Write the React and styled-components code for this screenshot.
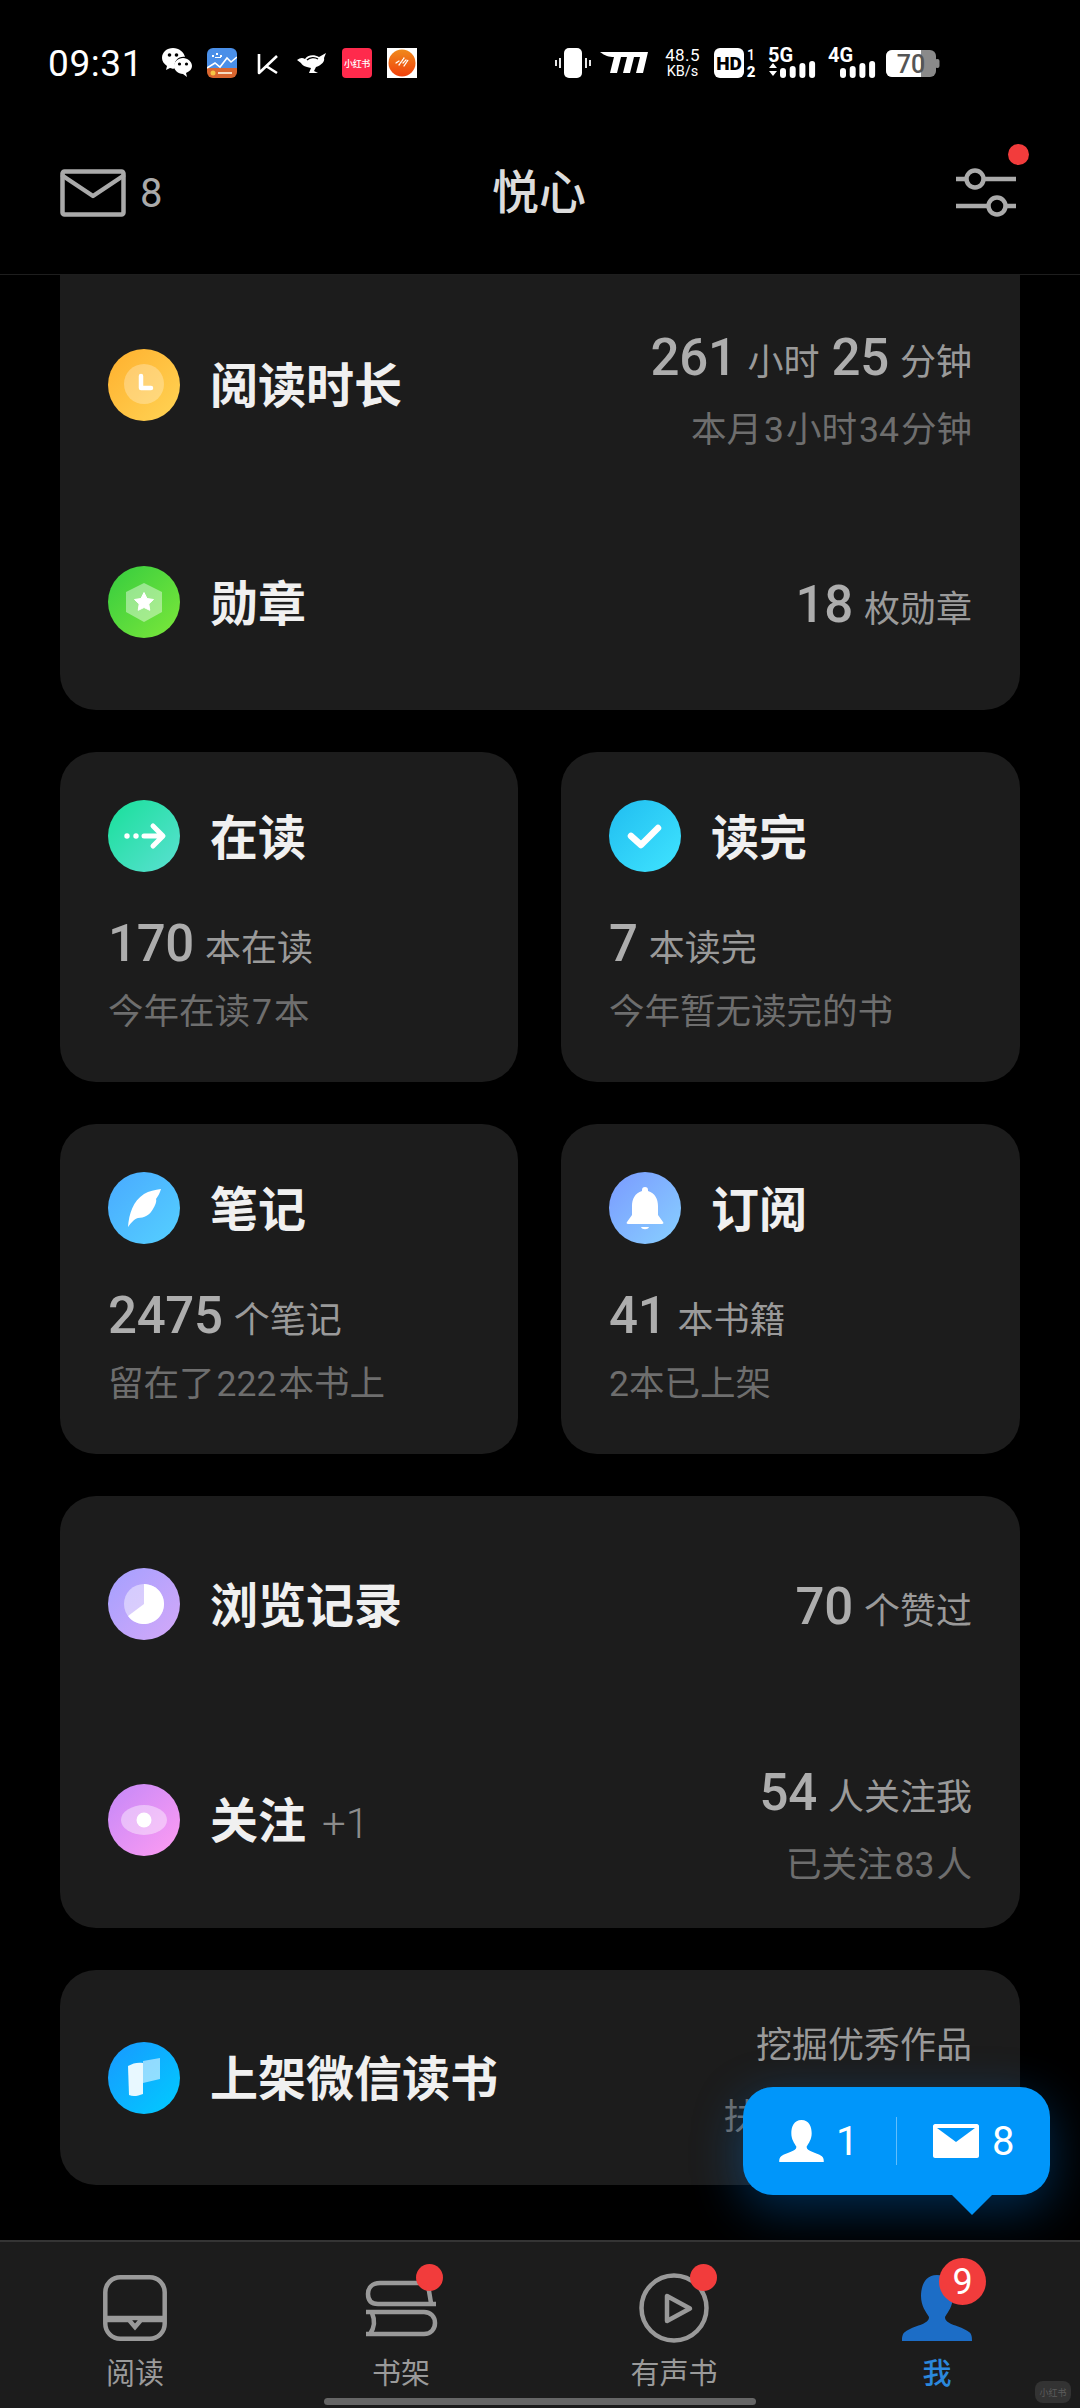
import React from 'react';
import styled, { createGlobalStyle } from 'styled-components';

const Global = createGlobalStyle`
  html, body { margin: 0; padding: 0; background: #000; }
  * { box-sizing: border-box; }
  #root { width: 1080px; height: 2408px; }
`;
const FONT = `Roboto, "Noto Sans CJK SC", sans-serif`;

const Page = styled.div`
  width: 1080px; height: 2408px; background: #000; display: flex; flex-direction: column;
  overflow: hidden; position: relative; font-family: ${FONT};
`;
const Header = styled.header`
  height: 275px; flex: none; display: flex; flex-direction: column; border-bottom: 1px solid #1e1e1e;
`;
const StatusBar = styled.div`
  height: 126px; flex: none; display: flex; align-items: center; padding: 0 140px 0 48px; justify-content: space-between;
`;
const StatusGroup = styled.div`display: flex; align-items: center;`;
const Clock = styled.span`
  color: #fff; font-size: 37px; width: 114px; letter-spacing: .6px; line-height: 1;
`;
const Glyph = styled.svg`
  flex: none; display: block; overflow: visible; margin-left: ${p => p.$ml || 0}px;
`;
const Speed = styled.div`
  margin-left: 15px; width: 39px; color: #fff; display: flex; flex-direction: column; align-items: center; line-height: 1;
`;
const SpeedValue = styled.span`font-size: 17px; letter-spacing: .4px;`;
const SpeedUnit = styled.span`font-size: 14.5px; margin-top: 1px;`;

const Nav = styled.div`
  flex: 1; display: flex; align-items: center; justify-content: space-between; padding: 0 62px 14px 60px; position: relative;
`;
const NavMail = styled.div`display: flex; align-items: center; gap: 14px; color: #aaa; font-size: 40px; width: 170px;`;
const NavTitle = styled.h1`
  margin: 0; font-size: 47px; line-height: 60px; font-weight: 500; color: #dcdcdc; letter-spacing: 0;
`;
const Settings = styled.div`
  width: 170px; display: flex; justify-content: flex-end; position: relative;
`;
const RedDot = styled.span`
  position: absolute; border-radius: 50%; background: #f23c3c;
  width: ${p => p.$size}px; height: ${p => p.$size}px; left: ${p => p.$x}px; top: ${p => p.$y}px;
  color: #fff; display: flex; align-items: center; justify-content: center; font-size: 36px; line-height: 1;
`;

const Scroll = styled.main`
  flex: 1; min-height: 0; padding: 0 60px; display: flex; flex-direction: column; gap: 42px; overflow: hidden;
`;
const Card = styled.section`
  background: #1c1c1c; flex: none; border-radius: ${p => p.$flatTop ? '0 0 36px 36px' : '36px'};
  ${p => p.$half ? 'padding: 48px 48px 0; height: 330px;' : 'padding: 0 48px;'}
`;
const Row = styled.div`
  height: ${p => p.$h || 216}px; display: flex; align-items: center; justify-content: space-between;
`;
const TitleGroup = styled.div`display: flex; align-items: center; gap: 30px;`;
const IconCircle = styled.div`
  width: 72px; height: 72px; border-radius: 50%; flex: none; display: flex; align-items: center; justify-content: center;
  background: linear-gradient(135deg, ${p => p.$from}, ${p => p.$to});
`;
const Title = styled.h2`
  margin: 0; padding-top: 5px; font-size: 48px; line-height: 60px; font-weight: 600; color: #f0f0f0; white-space: nowrap;
`;
const Extra = styled.span`
  font-weight: 300; font-size: 42px; color: #8c8c8c; margin-left: 16px;
`;
const Side = styled.div`
  display: flex; flex-direction: column; align-items: flex-end; padding-top: ${p => p.$pt ?? 14}px;
`;
const StatLine = styled.div`
  display: flex; align-items: baseline; height: 58px; white-space: nowrap;
  margin-top: ${p => p.$mt || 0}px;
`;
const Num = styled.span`
  font-size: 51px; line-height: 58px; font-weight: 500; color: #adadad; letter-spacing: -0.3px;
  margin-left: ${p => p.$ml || 0}px;
`;
const Unit = styled.span`
  font-size: 36px; line-height: 58px; color: #9a9a9a; margin-left: 11px;
`;
const Sub = styled.div`
  font-size: 35.5px; line-height: 50px; color: #6e6e6e; white-space: nowrap; margin-top: ${p => p.$mt || 0}px;
`;
const SubNum = styled.span`margin: 0 2px;`;
const Plain = styled.div`
  font-size: 36px; line-height: 50px; color: #9a9a9a; white-space: nowrap;
`;
const HalfGrid = styled.div`
  display: grid; grid-template-columns: 458px 459px; column-gap: 43px; flex: none;
`;

const Bubble = styled.div`
  position: absolute; left: 743px; top: 2087px; width: 307px; height: 108px; border-radius: 30px; background: #0096fa;
  box-shadow: 0 14px 50px rgba(0,130,240,.34); display: flex; align-items: center; color: #fff; font-size: 40px;
  &::after {
    content: ''; position: absolute; left: 209px; top: 108px; width: 0; height: 0;
    border-left: 20px solid transparent; border-right: 20px solid transparent; border-top: 20px solid #0096fa;
  }
`;
const BubbleItem = styled.div`
  display: flex; align-items: center; gap: ${p => p.$gap}px; padding-left: ${p => p.$pl}px; width: ${p => p.$w}px;
`;
const BubbleDivider = styled.span`width: 1px; height: 48px; background: rgba(255,255,255,.38); flex: none;`;

const TabBar = styled.nav`
  height: 168px; flex: none; background: #1c1c1c; border-top: 2px solid #343434; padding: 30px 0 0 85px;
  display: grid; grid-template-columns: 266px 273px 263px 100px; position: relative;
`;
const Tab = styled.div`
  width: 100px; display: flex; flex-direction: column; align-items: center; position: relative;
`;
const TabIcon = styled.div`
  height: 72px; display: flex; align-items: center; justify-content: center;
`;
const TabLabel = styled.span`
  margin-top: 10px; font-size: 29px; line-height: 40px; white-space: nowrap; color: ${p => p.$active ? '#2b88dc' : '#9a9a9a'};
  font-weight: ${p => p.$active ? 500 : 400};
`;
const HomeBar = styled.span`
  position: absolute; left: 324px; top: 156px; width: 432px; height: 7px; border-radius: 4px; background: #666;
`;
const Watermark = styled.span`
  position: absolute; left: 1035px; top: 139px; width: 36px; height: 22px; border-radius: 8px; background: #333;
  color: #5c5c5c; font-size: 9px; display: flex; align-items: center; justify-content: center; white-space: nowrap;
`;
const RedBook = styled.span`
  margin-left: 15px; width: 30px; height: 30px; border-radius: 4px; background: #ff2a4c; color: #fff; font-size: 9px;
  display: flex; align-items: center; justify-content: center; white-space: nowrap; letter-spacing: -.3px; font-weight: 500;
`;

const W = { stroke: '#fff', fill: 'none', strokeLinecap: 'round', strokeLinejoin: 'round' };

const icons = {
  clock: <svg width="72" height="72" viewBox="0 0 72 72"><circle cx="36" cy="35" r="20" fill="#fff" opacity=".28" /><path d="M33 27V39H43" {...W} strokeWidth="4.5" /></svg>,
  medal: <svg width="72" height="72" viewBox="0 0 72 72"><path d="M36 17 54 26V46L36 56 18 46V26Z" fill="#fff" opacity=".42" /><path d="M36 26.5l3 6 6.5 1-4.7 4.5 1 6.3-5.8-2.8-5.8 2.8 1-6.3-4.7-4.5 6.5-1z" fill="#fff" stroke="#fff" strokeLinejoin="round" /></svg>,
  arrow: <svg width="72" height="72" viewBox="0 0 72 72"><circle cx="19" cy="36" r="2.7" fill="#fff" /><circle cx="28" cy="36" r="2.7" fill="#fff" /><path d="M36 36H54M45 26 55 36 45 46" {...W} strokeWidth="5" /></svg>,
  check: <svg width="72" height="72" viewBox="0 0 72 72"><path d="M22 36 32 45 49 28" {...W} strokeWidth="6.5" /></svg>,
  feather: <svg width="72" height="72" viewBox="0 0 72 72"><path d="M20 55C21 42 25 29 36 22 41 19 47 18 53 17 52 21 50 24 48 27 49 29 47 34 45 37 42 43 36 46 30 46 26 47 23 51 20 55Z" fill="#fff" /></svg>,
  bell: <svg width="72" height="72" viewBox="0 0 72 72"><path d="M36 15c2 0 3 1 3 3v1c7 2 10 8 10 15v9l5 7c1 1 0 2-1 2H19c-1 0-2-1-1-2l5-7v-9c0-7 3-13 10-15v-1c0-2 1-3 3-3Z" fill="#fff" /><path d="M32 55H40C39 58 33 58 32 55Z" fill="#fff" /></svg>,
  pie: <svg width="72" height="72" viewBox="0 0 72 72"><circle cx="36" cy="36" r="20" fill="#fff" opacity=".45" /><path d="M36 36V16A20 20 0 1 1 20 48Z" fill="#fff" /></svg>,
  eye: <svg width="72" height="72" viewBox="0 0 72 72"><ellipse cx="36" cy="36" rx="23" ry="15" fill="#fff" opacity=".42" /><circle cx="36" cy="36" r="7.5" fill="#fff" /></svg>,
  store: <svg width="72" height="72" viewBox="0 0 72 72"><path d="M35 19 52 16V37L35 41Z" fill="#fff" opacity=".55" /><path d="M20 24C25 21 30 20 35 21V52C30 54 25 55 21 53Z" fill="#e8f8ff" /></svg>,
};

const MailOutline = () => (
  <svg width="66" height="48" viewBox="0 0 66 48" fill="none" stroke="#aaa" strokeWidth="4.5" strokeLinejoin="round">
    <rect x="2.5" y="2.5" width="61" height="43" rx="2" /><path d="M3 7 33 27 63 7" strokeLinecap="round" />
  </svg>
);
const Sliders = () => (
  <svg width="62" height="50" viewBox="0 0 62 50" fill="none" stroke="#aaa" strokeWidth="4.5">
    <path d="M0 11H10M28 11H60M0 38H32M50 38H60" />
    <circle cx="19" cy="11" r="8.5" /><circle cx="41" cy="38" r="8.5" />
  </svg>
);
const person = "M35 0C23 0 19 11 19 21 19 31 24 37 27 42 27 50 12 50 3 57 0 59 0 63 0 66H70C70 63 70 59 67 57 58 50 43 50 43 42 46 37 51 31 51 21 51 11 47 0 35 0Z";

const Signal = ({ label, arrows, ml }) => (
  <Glyph $ml={ml} width="48" height="30" viewBox="0 0 48 30">
    <text x={0} y={14} fontSize="20" fontWeight="700" fill="#fff" fontFamily="Roboto, sans-serif">{label}</text>
    {arrows && <path d="M5 15 9 20H1ZM1 23H9L5 28Z" fill="#fff" />}
    {[0, 1, 2, 3].map(i => {
      const h = [10, 12, 15, 17][i];
      return <rect key={i} x={12 + i * 9.7} y={30 - h} width="6" height={h} rx="3" fill="#fff" />;
    })}
  </Glyph>
);

const StatusLeft = () => (
  <StatusGroup>
    <Clock>09:31</Clock>
    <Glyph width="30" height="30" viewBox="0 0 30 30">
      <path d="M11 0C5 0 0 4 0 10c0 3 2 6 5 8l-1 4 4-2c3 1 4 1 5 0C11 13 17 8 23 9 22 4 17 0 11 0Z" fill="#fff" />
      <path d="M21 10c-5 0-9 4-9 8s4 8 9 8l4 3-1-4c4-2 6-4 6-7 0-4-4-8-9-8Z" fill="#fff" />
      <circle cx="7.5" cy="7" r="1.8" /><circle cx="14.5" cy="7" r="1.8" /><circle cx="17.5" cy="16" r="1.6" /><circle cx="24.5" cy="16" r="1.6" />
    </Glyph>
    <Glyph $ml={15} width="30" height="30" viewBox="0 0 30 30">
      <defs><clipPath id="app"><rect width="30" height="30" rx="6" /></clipPath></defs>
      <g clipPath="url(#app)">
        <rect width="30" height="21" fill="#4a8fe8" /><rect y="20" width="30" height="10" fill="#d9662f" />
        <path d="M0 20 8 15 13 19 20 10 24 14 30 9" fill="none" stroke="#fff" strokeWidth="1.6" />
        <path d="M5 7h2v2H5zM9 5h2v2H9zM13 7h2v2h-2zM8 9h6v1H8z" fill="#fff" />
        <circle cx="6" cy="25" r="2.5" fill="#f6c544" /><rect x="11" y="24" width="14" height="2" fill="#f8dcc0" />
      </g>
    </Glyph>
    <Glyph $ml={15} width="30" height="30" viewBox="0 0 30 30">
      <path d="M7 6V25L25 8M14 18 25 25" fill="none" stroke="#fff" strokeWidth="2.6" strokeLinejoin="round" />
    </Glyph>
    <Glyph $ml={15} width="30" height="30" viewBox="0 0 30 30">
      <path d="M0 12C3 10 5 9 8 11 10 7 17 6 22 9L29 5 27 10C28 13 25 17 19 19L17 23 21 25H12L14 20C8 19 5 17 4 15Z" fill="#fff" />
      <path d="M10 12C13 9 18 9 21 11" fill="none" stroke="#000" strokeWidth="1.4" />
    </Glyph>
    <RedBook>小红书</RedBook>
    <Glyph $ml={15} width="30" height="30" viewBox="0 0 30 30">
      <rect width="30" height="30" fill="#fff" />
      <defs><linearGradient id="orange" x1="0" y1="0" x2="0" y2="1"><stop offset="0" stopColor="#f08a1c" /><stop offset="1" stopColor="#f0400c" /></linearGradient></defs>
      <circle cx="15" cy="15" r="13.5" fill="url(#orange)" />
      <path d="M9 15l3-2M12 17l5-7M16 15l3-3M17 18l4-6" stroke="#fff" strokeWidth="1.3" strokeLinecap="round" strokeDasharray="1.6 1" />
    </Glyph>
  </StatusGroup>
);

const StatusRight = () => (
  <StatusGroup>
    <Glyph width="36" height="30" viewBox="0 0 36 30">
      <rect x="9" y="0" width="18" height="30" rx="5" fill="#fff" />
      <path d="M5 10V20M1 12V18M31 10V20M35 12V18" stroke="#fff" strokeWidth="1.8" />
    </Glyph>
    <Glyph $ml={9} width="48" height="24" viewBox="0 0 48 24">
      <path d="M0 1H48L43 22H36L40 6 34 6 30 22H23L27 6H21L17 22H10L14 6C9 6 5 5 0 1Z" fill="#fff" />
    </Glyph>
    <Speed><SpeedValue>48.5</SpeedValue><SpeedUnit>KB/s</SpeedUnit></Speed>
    <Glyph $ml={12} width="43" height="30" viewBox="0 0 43 30">
      <rect width="30" height="30" rx="6" fill="#fff" />
      <text x="15" y="22" textAnchor="middle" fontSize="19" fontWeight="900" fill="#000" fontFamily="Roboto, sans-serif">HD</text>
      <text x="37" y="12" textAnchor="middle" fontSize="14" fontWeight="500" fill="#fff" fontFamily="Roboto, sans-serif">1</text>
      <text x="37" y="29" textAnchor="middle" fontSize="15" fontWeight="900" fill="#fff" fontFamily="Roboto, sans-serif">2</text>
    </Glyph>
    <Signal label="5G" arrows ml={11} />
    <Signal label="4G" ml={12} />
    <Glyph $ml={10} width="54" height="27" viewBox="0 0 54 27">
      <defs><clipPath id="bat"><rect width="50" height="27" rx="6" /></clipPath></defs>
      <g clipPath="url(#bat)"><rect width="50" height="27" fill="#8a8a8a" /><rect width="35" height="27" fill="#fff" /></g>
      <rect x="49" y="9" width="4.5" height="9" rx="2" fill="#8a8a8a" />
      <text x="25" y="23" textAnchor="middle" fontSize="25" fontWeight="500" fill="#555" fontFamily="Roboto, sans-serif">70</text>
    </Glyph>
  </StatusGroup>
);

const HalfCard = ({ icon, from, to, title, num, unit, sub }) => (
  <Card $half>
    <TitleGroup><IconCircle $from={from} $to={to}>{icons[icon]}</IconCircle><Title>{title}</Title></TitleGroup>
    <StatLine $mt={43}><Num>{num}</Num><Unit>{unit}</Unit></StatLine>
    <Sub $mt={14}>{sub}</Sub>
  </Card>
);
const TitleIcon = ({ icon, from, to, children }) => (
  <TitleGroup><IconCircle $from={from} $to={to}>{icons[icon]}</IconCircle><Title>{children}</Title></TitleGroup>
);

export default function App() {
  return (
    <Page>
      <Global />
      <Header>
        <StatusBar><StatusLeft /><StatusRight /></StatusBar>
        <Nav>
          <NavMail><MailOutline /><span>8</span></NavMail>
          <NavTitle>悦心</NavTitle>
          <Settings><Sliders /><RedDot $size={21} $x={160} $y={-24} /></Settings>
        </Nav>
      </Header>

      <Scroll>
        <Card $flatTop>
          <Row $h={219}>
            <TitleIcon icon="clock" from="#ffb02e" to="#ffd455">阅读时长</TitleIcon>
            <Side>
              <StatLine><Num>261</Num><Unit>小时</Unit><Num $ml={12}>25</Num><Unit>分钟</Unit></StatLine>
              <Sub $mt={18}>本月<SubNum>3</SubNum>小时<SubNum>34</SubNum>分钟</Sub>
            </Side>
          </Row>
          <Row>
            <TitleIcon icon="medal" from="#35cc3f" to="#7de83a">勋章</TitleIcon>
            <Side $pt={6}><StatLine><Num>18</Num><Unit>枚勋章</Unit></StatLine></Side>
          </Row>
        </Card>

        <HalfGrid>
          <HalfCard icon="arrow" from="#18e09a" to="#5be0d2" title="在读" num="170" unit="本在读" sub={<>今年在读<SubNum>7</SubNum>本</>} />
          <HalfCard icon="check" from="#20bdf0" to="#40e4ff" title="读完" num="7" unit="本读完" sub="今年暂无读完的书" />
        </HalfGrid>
        <HalfGrid>
          <HalfCard icon="feather" from="#49aaff" to="#55d0ff" title="笔记" num="2475" unit="个笔记" sub={<>留在了<SubNum>222</SubNum>本书上</>} />
          <HalfCard icon="bell" from="#7a9aff" to="#88d0ff" title="订阅" num="41" unit="本书籍" sub="2本已上架" />
        </HalfGrid>

        <Card>
          <Row>
            <TitleIcon icon="pie" from="#a4a0ff" to="#d4a8f8">浏览记录</TitleIcon>
            <Side $pt={6}><StatLine><Num>70</Num><Unit>个赞过</Unit></StatLine></Side>
          </Row>
          <Row>
            <TitleIcon icon="eye" from="#c488f8" to="#ff9cf2">关注<Extra>+1</Extra></TitleIcon>
            <Side>
              <StatLine><Num>54</Num><Unit>人关注我</Unit></StatLine>
              <Sub $mt={18}>已关注<SubNum>83</SubNum>人</Sub>
            </Side>
          </Row>
        </Card>

        <Card>
          <Row $h={215}>
            <TitleIcon icon="store" from="#1898ff" to="#00ccff">上架微信读书</TitleIcon>
            <Side $pt={8}>
              <Plain>挖掘优秀作品</Plain>
              <Sub $mt={21}>扶持新锐创作者</Sub>
            </Side>
          </Row>
        </Card>
      </Scroll>

      <Bubble>
        <BubbleItem $pl={36} $gap={12} $w={153}>
          <svg width="45" height="42" viewBox="0 0 70 66"><path d={person} fill="#fff" /></svg>
          <span>1</span>
        </BubbleItem>
        <BubbleDivider />
        <BubbleItem $pl={36} $gap={13} $w={150}>
          <svg width="46" height="34" viewBox="0 0 46 34">
            <path d="M2 0H44C45 0 46 1 46 2V32C46 33 45 34 44 34H2C1 34 0 33 0 32V2C0 1 1 0 2 0Z" fill="#fff" />
            <path d="M4 4H42L23 18Z" fill="#0096fa" />
          </svg>
          <span>8</span>
        </BubbleItem>
      </Bubble>

      <TabBar>
        <Tab>
          <TabIcon>
            <svg width="64" height="66" viewBox="0 0 64 66" fill="none" stroke="#999" strokeWidth="4.5">
              <rect x="2.3" y="2.3" width="59.4" height="61.4" rx="15" />
              <path d="M3 43H61M3 45H26L32 52 38 45H61" />
            </svg>
          </TabIcon>
          <TabLabel>阅读</TabLabel>
        </Tab>
        <Tab>
          <TabIcon>
            <svg width="74" height="58" viewBox="0 0 74 58" fill="none" stroke="#999" strokeWidth="4.5">
              <path d="M60 4H16C8 4 4 9 4 15S7 25 14 25H72M64 6 67 24" />
              <path d="M2 55H60C67 55 71 50 71 44S67 33 60 33H2M8 34C11 41 11 48 6 55" />
            </svg>
          </TabIcon>
          <RedDot $size={27} $x={65} $y={-8} />
          <TabLabel>书架</TabLabel>
        </Tab>
        <Tab>
          <TabIcon>
            <svg width="70" height="70" viewBox="0 0 70 70" fill="none" stroke="#999" strokeWidth="4.5" strokeLinejoin="round">
              <circle cx="35" cy="35" r="32.5" /><path d="M28 23V48L51 35.5Z" />
            </svg>
          </TabIcon>
          <RedDot $size={27} $x={66} $y={-8} />
          <TabLabel>有声书</TabLabel>
        </Tab>
        <Tab>
          <TabIcon><svg width="70" height="66" viewBox="0 0 70 66"><path d={person} fill="#1c6dc6" /></svg></TabIcon>
          <RedDot $size={47} $x={52} $y={-14}>9</RedDot>
          <TabLabel $active>我</TabLabel>
        </Tab>
        <HomeBar />
        <Watermark>小红书</Watermark>
      </TabBar>
    </Page>
  );
}
